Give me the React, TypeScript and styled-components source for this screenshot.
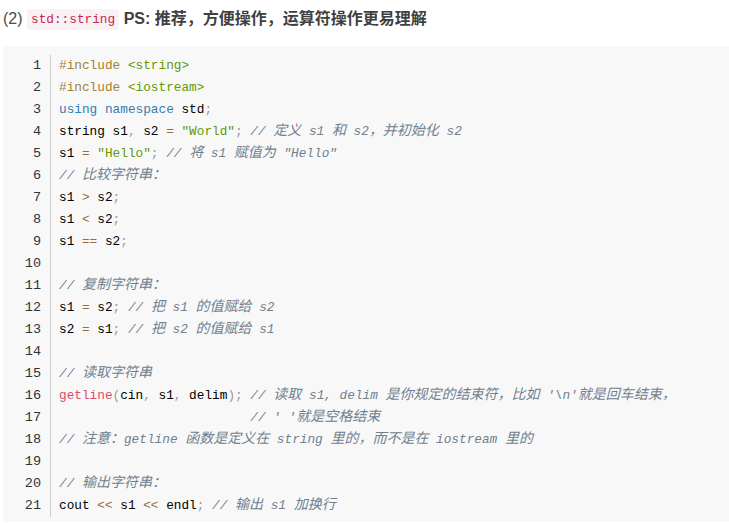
import React from "react";
import styled, { createGlobalStyle } from "styled-components";

const Global = createGlobalStyle`
  html, body { margin: 0; padding: 0; background: #ffffff; }
  body { font-family: "Liberation Sans", "Noto Sans CJK SC", sans-serif; }
`;

const Page = styled.div`
  padding: 5px 0 0 3px;
`;

const Heading = styled.p`
  margin: 0 0 13px 0;
  font-size: 16px;
  line-height: 28px;
  color: #4d4d4d;
  font-family: "Liberation Sans", "Noto Sans CJK SC", sans-serif;
`;

const Strong = styled.strong`
  font-weight: bold;
  color: #3f3f3f;
`;

const InlineCode = styled.code`
  display: inline-block;
  font-family: "Liberation Mono", "Noto Sans CJK SC", monospace;
  font-size: 12.75px;
  line-height: 17px;
  padding: 2px 4px;
  border-radius: 3px;
  background: #f9f2f4;
  color: #c7254e;
  vertical-align: 1px;
`;

const Block = styled.pre`
  margin: 0;
  padding: 9px 0 5px 0;
  background: #f8f8f8;
  font-family: "Liberation Mono", "Noto Sans CJK SC", monospace;
  font-size: 12.75px;
  line-height: 22px;
  color: #000000;
`;

const Row = styled.div`
  display: flex;
  height: 22px;
  line-height: 22px;
`;

const LineNo = styled.span`
  flex: 0 0 38px;
  text-align: right;
  padding-right: 9px;
  border-right: 1px solid #cccccc;
  color: #333333;
  font-size: 13.5px;
  user-select: none;
`;

const Code = styled.span`
  padding-left: 8px;
  white-space: pre;
`;

const Han = styled.span`
  font-family: "Noto Sans CJK SC", sans-serif;
  font-size: 14px;
  line-height: 1;
`;

type Kind = "t" | "dir" | "str" | "kw" | "op" | "p" | "cm" | "fn";

const Tok = styled.span<{ $k: Kind }>`
  color: ${(p) =>
    ({
      t: "#000000",
      dir: "#a3822f",
      str: "#669900",
      kw: "#2f7fb0",
      op: "#9a6e3a",
      p: "#999999",
      cm: "#708090",
      fn: "#dd4a68",
    } as Record<Kind, string>)[p.$k]};
  font-style: ${(p) => (p.$k === "cm" ? "italic" : "normal")};
`;

const renderText = (text: string) => {
  const parts = text.split(/([\u2E80-\u9FFF\uFF00-\uFFEF\u3000-\u303F]+)/);
  return parts.map((s, i) =>
    i % 2 === 1 ? <Han key={i}>{s}</Han> : <React.Fragment key={i}>{s}</React.Fragment>
  );
};

type Line = [Kind, string][];

const lines: Line[] = [
  [["dir", "#include"], ["t", " "], ["str", "<string>"]],
  [["dir", "#include"], ["t", " "], ["str", "<iostream>"]],
  [["kw", "using"], ["t", " "], ["kw", "namespace"], ["t", " std"], ["p", ";"]],
  [
    ["t", "string s1"], ["p", ","], ["t", " s2 "], ["op", "="], ["t", " "],
    ["str", "\"World\""], ["p", ";"], ["t", " "],
    ["cm", "// 定义 s1 和 s2，并初始化 s2"],
  ],
  [
    ["t", "s1 "], ["op", "="], ["t", " "], ["str", "\"Hello\""], ["p", ";"], ["t", " "],
    ["cm", "// 将 s1 赋值为 \"Hello\""],
  ],
  [["cm", "// 比较字符串："]],
  [["t", "s1 "], ["op", ">"], ["t", " s2"], ["p", ";"]],
  [["t", "s1 "], ["op", "<"], ["t", " s2"], ["p", ";"]],
  [["t", "s1 "], ["op", "=="], ["t", " s2"], ["p", ";"]],
  [],
  [["cm", "// 复制字符串："]],
  [["t", "s1 "], ["op", "="], ["t", " s2"], ["p", ";"], ["t", " "], ["cm", "// 把 s1 的值赋给 s2"]],
  [["t", "s2 "], ["op", "="], ["t", " s1"], ["p", ";"], ["t", " "], ["cm", "// 把 s2 的值赋给 s1"]],
  [],
  [["cm", "// 读取字符串"]],
  [
    ["fn", "getline"], ["p", "("], ["t", "cin"], ["p", ","], ["t", " s1"], ["p", ","],
    ["t", " delim"], ["p", ")"], ["p", ";"], ["t", " "],
    ["cm", "// 读取 s1, delim 是你规定的结束符，比如 '\\n'就是回车结束，"],
  ],
  [["t", "                         "], ["cm", "// ' '就是空格结束"]],
  [["cm", "// 注意：getline 函数是定义在 string 里的，而不是在 iostream 里的"]],
  [],
  [["cm", "// 输出字符串："]],
  [
    ["t", "cout "], ["op", "<<"], ["t", " s1 "], ["op", "<<"], ["t", " endl"], ["p", ";"],
    ["t", " "], ["cm", "// 输出 s1 加换行"],
  ],
];

export default function App() {
  return (
    <>
      <Global />
      <Page>
        <Heading>
          (2) <InlineCode>std::string</InlineCode> <Strong>PS: 推荐，方便操作，运算符操作更易理解</Strong>
        </Heading>
        <Block>
          {lines.map((line, i) => (
            <Row key={i}>
              <LineNo>{i + 1}</LineNo>
              <Code>
                {line.map(([k, s], j) => (
                  <Tok key={j} $k={k}>
                    {renderText(s)}
                  </Tok>
                ))}
              </Code>
            </Row>
          ))}
        </Block>
      </Page>
    </>
  );
}
